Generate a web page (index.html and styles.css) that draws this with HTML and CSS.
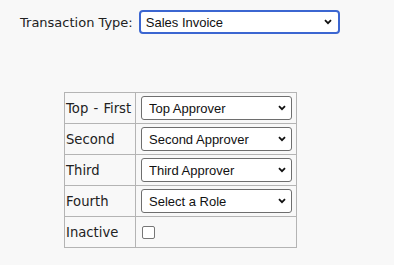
FILE: index.html
```html
<!DOCTYPE html>
<html lang="en">
<head>
    <meta charset="UTF-8">
    <meta name="viewport" content="width=device-width, initial-scale=1.0">
    <title>Approval Setup</title>
    <link rel="stylesheet" href="styles.css">
</head>
<body>

    <div class="type-row">
        <label for="transType">Transaction Type:</label>
        <select id="transType" class="type-select">
            <option>Sales Invoice</option>
            <option>Purchase Order</option>
        </select>
    </div>

    <table class="approvals">
        <tr>
            <td class="lbl">Top - First</td>
            <td class="fld"><select class="role"><option>Top Approver</option></select></td>
        </tr>
        <tr>
            <td class="lbl">Second</td>
            <td class="fld"><select class="role"><option>Second Approver</option></select></td>
        </tr>
        <tr>
            <td class="lbl">Third</td>
            <td class="fld"><select class="role"><option>Third Approver</option></select></td>
        </tr>
        <tr>
            <td class="lbl">Fourth</td>
            <td class="fld"><select class="role"><option>Select a Role</option></select></td>
        </tr>
        <tr>
            <td class="lbl">Inactive</td>
            <td class="fld"><input type="checkbox" class="chk"></td>
        </tr>
    </table>

</body>
</html>
```

FILE: styles.css
```css
body {
    margin: 0;
    background: #f8f8f8;
    font-family: "DejaVu Sans", Verdana, sans-serif;
    font-size: 13.2px;
    word-spacing: 1px;
    color: #222;
}
.type-row {
    display: flex;
    align-items: center;
    gap: 6px;
    padding: 10px 0 0 20px;
}
.type-row label {
    font-size: 13px;
    word-spacing: 0;
}
select {
    appearance: none;
    -webkit-appearance: none;
    font-family: "Liberation Sans", Arial, sans-serif;
    font-size: 13px;
    word-spacing: 0;
    color: #111;
    background-color: #fff;
    background-image: url("data:image/svg+xml,%3Csvg xmlns='http://www.w3.org/2000/svg' width='8' height='6' viewBox='0 0 8 6'%3E%3Cpath d='M1 1.2 L4 4.2 L7 1.2' fill='none' stroke='%23111' stroke-width='1.8'/%3E%3C/svg%3E");
    background-repeat: no-repeat;
    margin: 0;
}
.type-select {
    width: 201px;
    height: 24px;
    border: 2px solid #3b66d1;
    border-radius: 4px;
    padding: 0 0 0 5px;
    background-position: right 6px center;
}
.approvals {
    margin: 58px 0 0 64px;
    border-collapse: collapse;
}
.approvals td {
    border: 1px solid #b4b4b4;
    height: 30px;
    padding: 0;
}
.approvals td.lbl {
    width: 68px;
    padding: 0 1px;
    white-space: nowrap;
}
.approvals td.fld {
    padding: 0 4px 0 5px;
}
.role {
    display: block;
    width: 151px;
    height: 24px;
    border: 1px solid #6e6e6e;
    border-radius: 3px;
    padding: 0 0 0 7px;
    background-position: right 5px center;
}
.chk {
    appearance: none;
    -webkit-appearance: none;
    display: block;
    width: 13px;
    height: 13px;
    margin: 0 0 0 1px;
    border: 1px solid #767676;
    border-radius: 2px;
    background: #fff;
}
```
